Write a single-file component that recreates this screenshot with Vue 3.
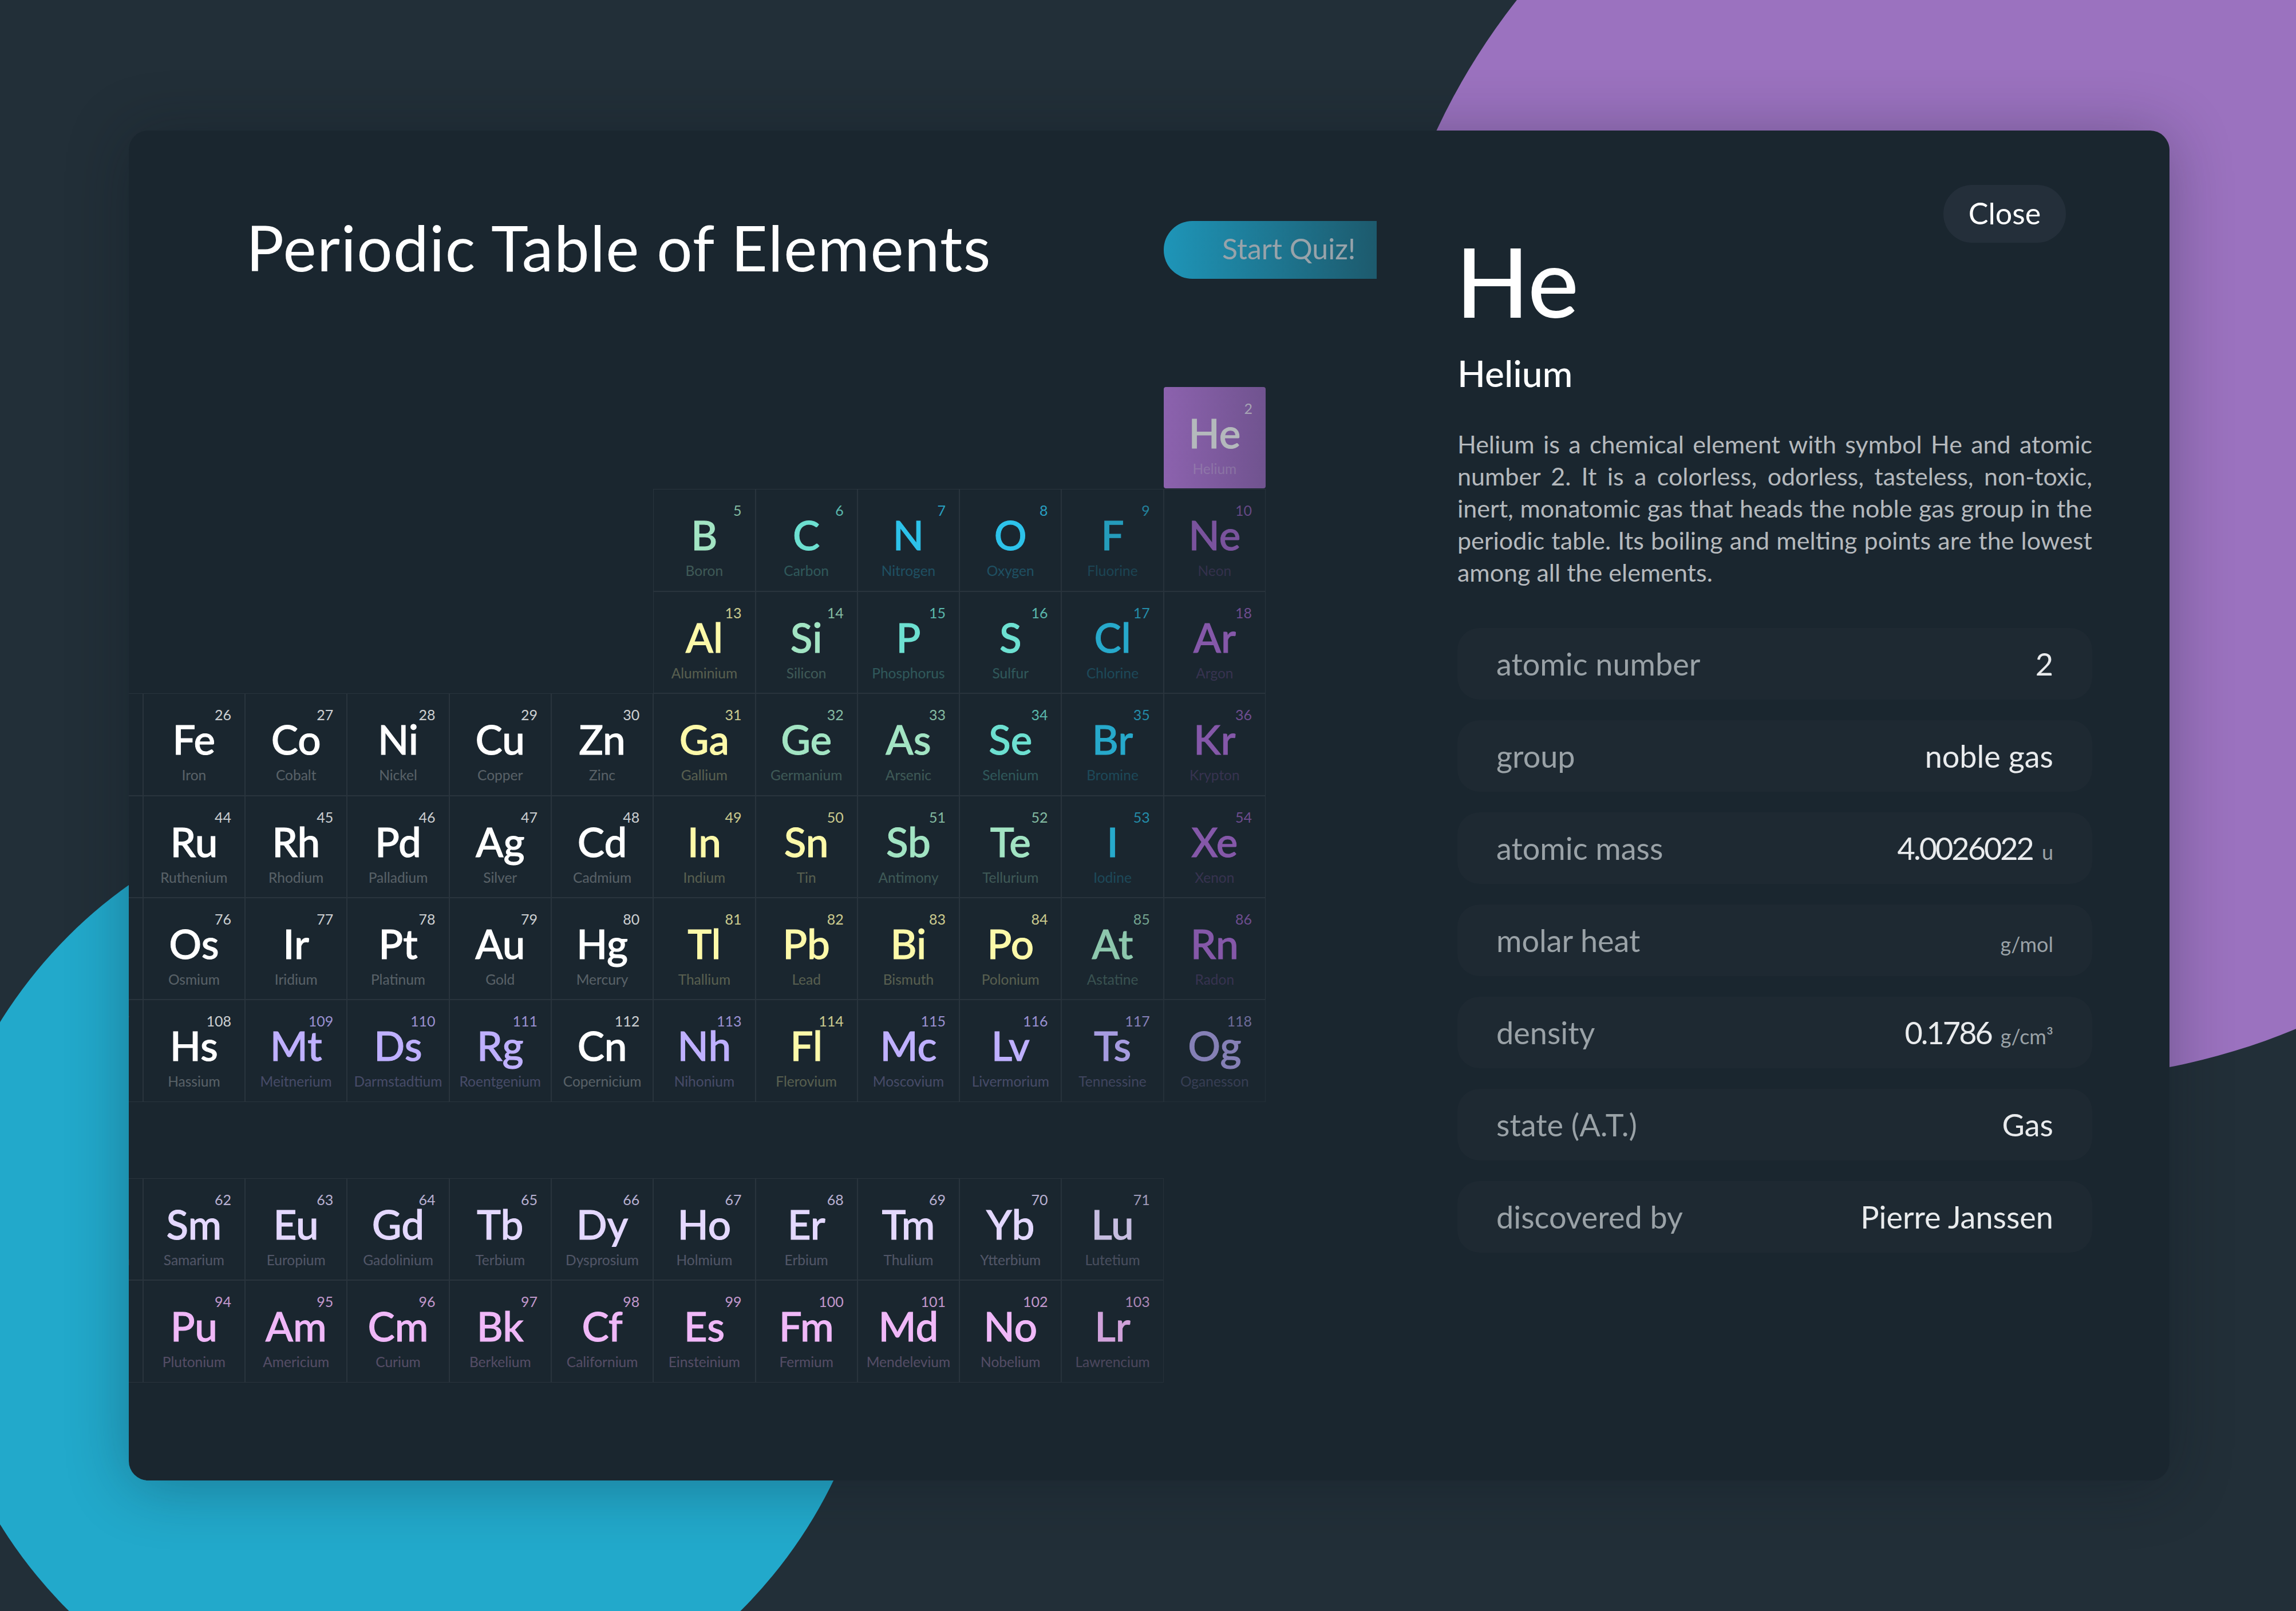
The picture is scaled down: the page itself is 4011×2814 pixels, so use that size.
<script setup>
const rows = [
  [[18, 'He', 2, 'Helium', 'selected']],
  [[13, 'B', 5, 'Boron', 'mint'], [14, 'C', 6, 'Carbon', 'teal'], [15, 'N', 7, 'Nitrogen', 'sky'], [16, 'O', 8, 'Oxygen', 'sky'], [17, 'F', 9, 'Fluorine', 'blue', 0.9], [18, 'Ne', 10, 'Neon', 'noble', 0.9]],
  [[13, 'Al', 13, 'Aluminium', 'yellow'], [14, 'Si', 14, 'Silicon', 'mint'], [15, 'P', 15, 'Phosphorus', 'teal'], [16, 'S', 16, 'Sulfur', 'teal'], [17, 'Cl', 17, 'Chlorine', 'blue'], [18, 'Ar', 18, 'Argon', 'noble']],
  [[7, 'Mn', 25, 'Manganese', 'white'], [8, 'Fe', 26, 'Iron', 'white'], [9, 'Co', 27, 'Cobalt', 'white'], [10, 'Ni', 28, 'Nickel', 'white'], [11, 'Cu', 29, 'Copper', 'white'], [12, 'Zn', 30, 'Zinc', 'white'], [13, 'Ga', 31, 'Gallium', 'yellow'], [14, 'Ge', 32, 'Germanium', 'mint'], [15, 'As', 33, 'Arsenic', 'mint'], [16, 'Se', 34, 'Selenium', 'teal'], [17, 'Br', 35, 'Bromine', 'blue'], [18, 'Kr', 36, 'Krypton', 'noble']],
  [[7, 'Tc', 43, 'Technetium', 'white'], [8, 'Ru', 44, 'Ruthenium', 'white'], [9, 'Rh', 45, 'Rhodium', 'white'], [10, 'Pd', 46, 'Palladium', 'white'], [11, 'Ag', 47, 'Silver', 'white'], [12, 'Cd', 48, 'Cadmium', 'white'], [13, 'In', 49, 'Indium', 'yellow'], [14, 'Sn', 50, 'Tin', 'yellow'], [15, 'Sb', 51, 'Antimony', 'mint'], [16, 'Te', 52, 'Tellurium', 'mint'], [17, 'I', 53, 'Iodine', 'blue'], [18, 'Xe', 54, 'Xenon', 'noble']],
  [[7, 'Re', 75, 'Rhenium', 'white'], [8, 'Os', 76, 'Osmium', 'white'], [9, 'Ir', 77, 'Iridium', 'white'], [10, 'Pt', 78, 'Platinum', 'white'], [11, 'Au', 79, 'Gold', 'white'], [12, 'Hg', 80, 'Mercury', 'white'], [13, 'Tl', 81, 'Thallium', 'yellow'], [14, 'Pb', 82, 'Lead', 'yellow'], [15, 'Bi', 83, 'Bismuth', 'yellow'], [16, 'Po', 84, 'Polonium', 'yellow'], [17, 'At', 85, 'Astatine', 'mint', 0.85], [18, 'Rn', 86, 'Radon', 'noble']],
  [[7, 'Bh', 107, 'Bohrium', 'white'], [8, 'Hs', 108, 'Hassium', 'white'], [9, 'Mt', 109, 'Meitnerium', 'violet'], [10, 'Ds', 110, 'Darmstadtium', 'violet'], [11, 'Rg', 111, 'Roentgenium', 'violet'], [12, 'Cn', 112, 'Copernicium', 'white'], [13, 'Nh', 113, 'Nihonium', 'violet'], [14, 'Fl', 114, 'Flerovium', 'yellow'], [15, 'Mc', 115, 'Moscovium', 'violet'], [16, 'Lv', 116, 'Livermorium', 'violet'], [17, 'Ts', 117, 'Tennessine', 'violet', 0.85], [18, 'Og', 118, 'Oganesson', 'violet', 0.65]]
]
const series = [
  [[7, 'Pm', 61, 'Promethium', 'lilac'], [8, 'Sm', 62, 'Samarium', 'lilac'], [9, 'Eu', 63, 'Europium', 'lilac'], [10, 'Gd', 64, 'Gadolinium', 'lilac'], [11, 'Tb', 65, 'Terbium', 'lilac'], [12, 'Dy', 66, 'Dysprosium', 'lilac'], [13, 'Ho', 67, 'Holmium', 'lilac'], [14, 'Er', 68, 'Erbium', 'lilac'], [15, 'Tm', 69, 'Thulium', 'lilac'], [16, 'Yb', 70, 'Ytterbium', 'lilac'], [17, 'Lu', 71, 'Lutetium', 'lilac', 0.85]],
  [[7, 'Np', 93, 'Neptunium', 'pink'], [8, 'Pu', 94, 'Plutonium', 'pink'], [9, 'Am', 95, 'Americium', 'pink'], [10, 'Cm', 96, 'Curium', 'pink'], [11, 'Bk', 97, 'Berkelium', 'pink'], [12, 'Cf', 98, 'Californium', 'pink'], [13, 'Es', 99, 'Einsteinium', 'pink'], [14, 'Fm', 100, 'Fermium', 'pink'], [15, 'Md', 101, 'Mendelevium', 'pink'], [16, 'No', 102, 'Nobelium', 'pink'], [17, 'Lr', 103, 'Lawrencium', 'pink', 0.85]]
]
const toCells = (list) =>
  list.flatMap((row, r) =>
    row.map(([col, sym, num, name, kind, fade]) => ({
      sym, num, name, kind,
      place: { gridColumn: col - 6, gridRow: r + 1, opacity: fade ?? 1 }
    }))
  )
const mainCells = toCells(rows)
const seriesCells = toCells(series)
const facts = [
  { label: 'atomic number', value: '2' },
  { label: 'group', value: 'noble gas' },
  { label: 'atomic mass', value: '4.0026022', unit: 'u', numeric: true },
  { label: 'molar heat', value: '', unit: 'g/mol' },
  { label: 'density', value: '0.1786', unit: 'g/cm³', numeric: true },
  { label: 'state (A.T.)', value: 'Gas' },
  { label: 'discovered by', value: 'Pierre Janssen' }
]
</script>

<template>
  <div class="page">
    <div class="blob blob-purple"></div>
    <div class="blob blob-blue"></div>
    <main class="panel">
      <section class="table-pane">
        <header class="table-head">
          <h1 class="title">Periodic Table of Elements</h1>
          <button class="quiz">Start Quiz!</button>
        </header>
        <div class="grid main-grid">
          <div v-for="c in mainCells" :key="c.num" class="cell" :class="c.kind" :style="c.place">
            <span class="num">{{ c.num }}</span>
            <span class="sym">{{ c.sym }}</span>
            <span class="name">{{ c.name }}</span>
          </div>
        </div>
        <div class="grid series-grid">
          <div v-for="c in seriesCells" :key="c.num" class="cell" :class="c.kind" :style="c.place">
            <span class="num">{{ c.num }}</span>
            <span class="sym">{{ c.sym }}</span>
            <span class="name">{{ c.name }}</span>
          </div>
        </div>
      </section>
      <aside class="detail">
        <button class="close">Close</button>
        <div class="big">He</div>
        <h2 class="full">Helium</h2>
        <p class="desc">Helium is a chemical element with symbol He and atomic number 2. It is a colorless, odorless, tasteless, non-toxic, inert, monatomic gas that heads the noble gas group in the periodic table. Its boiling and melting points are the lowest among all the elements.</p>
        <ul class="facts">
          <li v-for="f in facts" :key="f.label" class="fact">
            <span class="fact-label">{{ f.label }}</span>
            <span class="fact-value"><span :class="{ tight: f.numeric }">{{ f.value }}</span><small v-if="f.unit" class="unit">{{ f.unit }}</small></span>
          </li>
        </ul>
      </aside>
    </main>
  </div>
</template>

<style>
html, body { margin: 0; background: #222f38; }
</style>

<style scoped>
.page {
  position: relative;
  width: 4011px;
  height: 2814px;
  overflow: hidden;
  background: #222f38;
  padding: 228px 221px 228px 225px;
  box-sizing: border-box;
  font-family: Lato, "Noto Sans", sans-serif;
  color: #fff;
}
.blob { position: absolute; border-radius: 50%; }
.blob-purple { left: 2400px; top: -444px; width: 2330px; height: 2330px; background: #9b72bf; }
.blob-blue { left: -125px; top: 1392px; width: 1664px; height: 1664px; background: #22a9cb; }
.panel {
  position: relative;
  display: flex;
  height: 100%;
  background: #1a262f;
  border-radius: 34px;
  box-shadow: 0 8px 110px rgba(12, 22, 30, 0.32);
}
.table-pane {
  width: 2180px;
  flex: none;
  overflow: hidden;
  border-radius: 34px 0 0 34px;
  padding: 158px 194px 0 0;
  box-sizing: border-box;
}
.table-head {
  display: flex;
  align-items: center;
  justify-content: space-between;
  height: 101px;
  padding-left: 205px;
  margin-right: -222px;
  margin-bottom: 189px;
}
.title { margin: 0 0 10px; font-weight: 400; font-size: 110px; line-height: 101px; letter-spacing: 1.4px; white-space: nowrap; }
.quiz {
  width: 400px;
  height: 101px;
  flex: none;
  border: 0;
  border-radius: 50px 0 0 50px;
  background: linear-gradient(90deg, #1e95b8, #1d5a6d 93%);
  color: #98a3aa;
  font: 400 50px Lato, sans-serif;
  text-align: left;
  padding: 0 0 6px 102px;
}
.grid {
  display: grid;
  grid-template-columns: repeat(12, 178.3px);
  grid-auto-rows: 178.4px;
  justify-content: end;
}
.main-grid { margin-bottom: 133px; }
.cell {
  display: flex;
  flex-direction: column;
  align-items: center;
  box-sizing: border-box;
  border: 1px solid #29343d;
  padding: 0 23px;
  white-space: nowrap;
}
.num { align-self: flex-end; font-size: 25px; line-height: 26px; margin-top: 23px; opacity: 0.78; }
.sym { font-size: 71px; line-height: 71px; font-weight: 500; margin-top: -6px; -webkit-text-stroke: 1px currentColor; }
.name { font-size: 24.5px; line-height: 30px; margin-top: 13px; opacity: 0.27; }
.white { color: #fff; }
.yellow { color: #fdf9a9; }
.mint { color: #a2e4c3; }
.teal { color: #6de0d1; }
.sky { color: #2dc2ea; }
.blue { color: #27a9cb; }
.noble { color: #8558a9; }
.violet { color: #bfb0ff; }
.lilac { color: #e4d8ff; }
.pink { color: #f0b8f8; }
.selected {
  color: #b4b9bc;
  border: 0;
  border-radius: 4px;
  background: linear-gradient(90deg, #8c62ae, #70538f);
  margin-bottom: 1px;
  padding-top: 1px;
}
.detail {
  flex: 1;
  min-width: 0;
  display: flex;
  flex-direction: column;
  padding: 95px 135px 0 141px;
}
.close {
  align-self: flex-end;
  width: 214px;
  height: 101px;
  margin-right: 46px;
  border: 0;
  border-radius: 50px;
  background: #242f3a;
  color: #fff;
  font: 400 52px Lato, sans-serif;
  padding: 0 0 4px;
}
.big { font-size: 168px; line-height: 168px; margin-top: -18px; margin-left: -3px; font-weight: 500; }
.full { margin: 42px 0 0; font-size: 64px; line-height: 72px; font-weight: 500; }
.desc {
  margin: 60px 0 0;
  font-size: 43px;
  line-height: 56px;
  text-align: justify;
  color: #b5b9bd;
}
.facts { list-style: none; margin: 69px 0 0; padding: 0; display: flex; flex-direction: column; gap: 36px; }
.fact {
  height: 125px;
  border-radius: 38px;
  background: #1e2932;
  padding: 0 68px;
  display: flex;
  align-items: center;
  justify-content: space-between;
  font-size: 54px;
}
.fact-label { color: #9aa2a7; }
.fact-value { color: #e9ebed; }
.tight { letter-spacing: -3px; }
.unit { font-size: 36px; color: #9aa2a7; margin-left: 16px; }
</style>
